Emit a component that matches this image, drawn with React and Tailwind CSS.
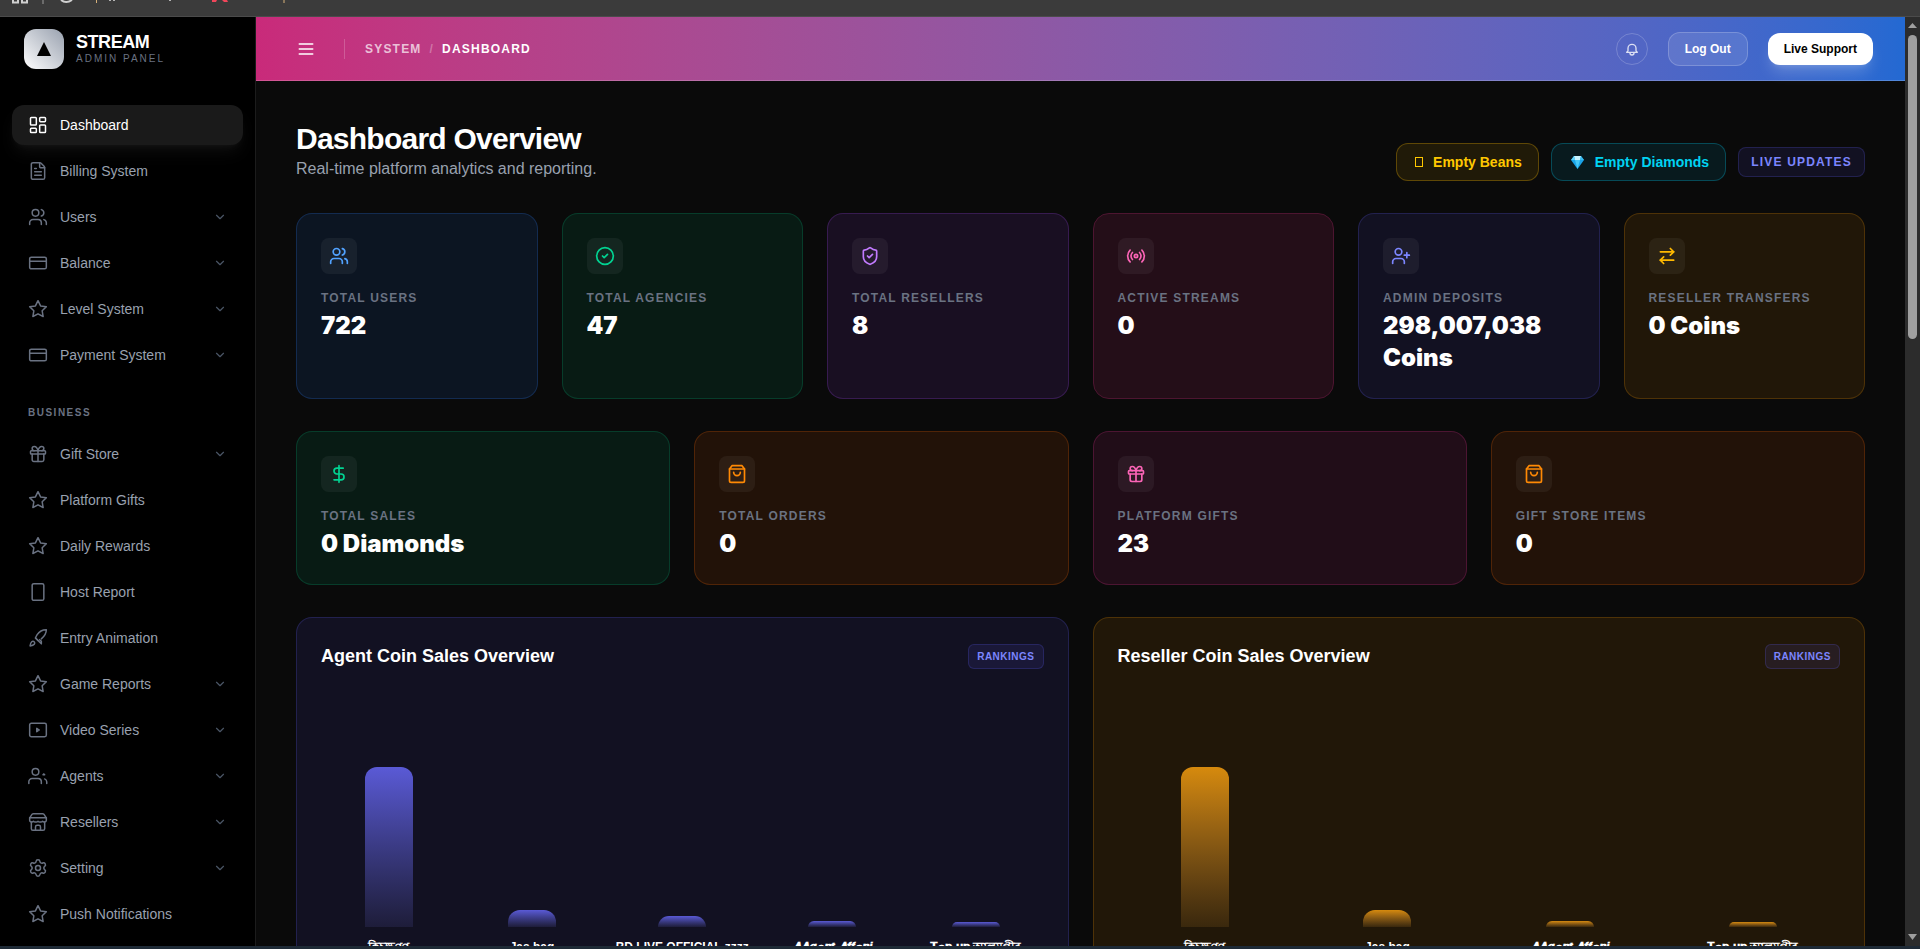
import { useState } from "react";
import {
  ArrowRightLeft,
  ChevronDown,
  CircleCheck,
  CreditCard,
  DollarSign,
  FileText,
  Gift,
  LayoutDashboard,
  Radio,
  Settings,
  ShieldCheck,
  UserPlus,
  Users,
} from "lucide-react";
import { FiShoppingBag, FiStar } from "react-icons/fi";

function Svg({ size = 20, strokeWidth = 2, className, children }) {
  return (
    <svg
      width={size}
      height={size}
      viewBox="0 0 24 24"
      fill="none"
      stroke="currentColor"
      strokeWidth={strokeWidth}
      strokeLinecap="round"
      strokeLinejoin="round"
      className={className}
      aria-hidden="true"
    >
      {children}
    </svg>
  );
}

const TabletIcon = (props) => (
  <Svg {...props}>
    <rect x="5" y="2" width="14" height="20" rx="2" />
  </Svg>
);

const RocketIcon = (props) => (
  <Svg {...props}>
    <path d="M4.5 16.5c-1.5 1.26-2 5-2 5s3.74-.5 5-2c.71-.84.7-2.13-.09-2.91a2.18 2.18 0 0 0-2.91-.09z" />
    <path d="M12 15l-3-3a22 22 0 0 1 2-3.950A12.880 12.880 0 0 1 22 2c0 2.720-.780 6.500-6 11" />
    <path d="M9 12l3 3 4 4v-3l-2-2" />
  </Svg>
);

const VideoIcon = (props) => (
  <Svg {...props}>
    <rect x="2" y="4" width="20" height="16" rx="2" />
    <path d="M10.5 10v4l3-2z" fill="currentColor" />
  </Svg>
);

const AgentsIcon = (props) => (
  <Svg {...props}>
    <path d="M16 21v-2a4 4 0 0 0-4-4H5a4 4 0 0 0-4 4v2" />
    <circle cx="9" cy="7" r="4" />
    <path d="M22.500 21v-2a4 4 0 0 0-2.500-3.500" />
    <path d="M18 10.500l1-1 1 1z" />
  </Svg>
);

const StoreIcon = (props) => (
  <Svg {...props}>
    <path d="M2 7l3-4.400A2 2 0 0 1 6.500 2h11a2 2 0 0 1 1.500.600L22 7" />
    <path d="M4 12v8a2 2 0 0 0 2 2h12a2 2 0 0 0 2-2v-8" />
    <path d="M15 22v-4a2 2 0 0 0-2-2h-2a2 2 0 0 0-2 2v4" />
    <path d="M2 7h20" />
    <path d="M22 7v3a2 2 0 0 1-2 2 2.700 2.700 0 0 1-2.600-.800 2.700 2.700 0 0 1-2.700.800 2.700 2.700 0 0 1-2.700-.800 2.700 2.700 0 0 1-2.700.800 2.700 2.700 0 0 1-2.700-.800A2.700 2.700 0 0 1 4 12a2 2 0 0 1-2-2V7" />
  </Svg>
);

const DiamondIcon = () => (
  <svg width="19" height="16" viewBox="0 0 19 16" aria-hidden="true">
    <path d="M6 2h7l3 4-6.500 9L3 6z" fill="#1aa3e8" />
    <path d="M6 2h7l-1 4H7z" fill="#c9f4ff" />
    <path d="M7 6h5l-2.500 9z" fill="#45c8f7" />
    <path d="M3 6l3-4 1 4z" fill="#5fd4fb" />
    <path d="M16 6l-3-4-1 4z" fill="#38bdf2" />
  </svg>
);

const mainNav = [
  { label: "Dashboard", icon: LayoutDashboard, active: true },
  { label: "Billing System", icon: FileText },
  { label: "Users", icon: Users, sub: true },
  { label: "Balance", icon: CreditCard, sub: true },
  { label: "Level System", icon: FiStar, sub: true },
  { label: "Payment System", icon: CreditCard, sub: true },
];

const businessNav = [
  { label: "Gift Store", icon: Gift, sub: true },
  { label: "Platform Gifts", icon: FiStar },
  { label: "Daily Rewards", icon: FiStar },
  { label: "Host Report", icon: TabletIcon },
  { label: "Entry Animation", icon: RocketIcon },
  { label: "Game Reports", icon: FiStar, sub: true },
  { label: "Video Series", icon: VideoIcon, sub: true },
  { label: "Agents", icon: AgentsIcon, sub: true },
  { label: "Resellers", icon: StoreIcon, sub: true },
  { label: "Setting", icon: Settings, sub: true },
  { label: "Push Notifications", icon: FiStar },
];

const platformStats = [
  { label: "Total Users", value: "722", icon: Users, card: "bg-blue-500/10 border-blue-500/20", color: "text-blue-400" },
  { label: "Total Agencies", value: "47", icon: CircleCheck, card: "bg-emerald-500/10 border-emerald-500/20", color: "text-emerald-400" },
  { label: "Total Resellers", value: "8", icon: ShieldCheck, card: "bg-purple-500/10 border-purple-500/20", color: "text-purple-400" },
  { label: "Active Streams", value: "0", icon: Radio, card: "bg-[#240e18] border-[#4d1530]", color: "text-pink-400" },
  { label: "Admin Deposits", value: "298,007,038 Coins", icon: UserPlus, card: "bg-indigo-500/10 border-indigo-500/20", color: "text-indigo-400" },
  { label: "Reseller Transfers", value: "0 Coins", icon: ArrowRightLeft, card: "bg-amber-500/10 border-amber-500/20", color: "text-amber-400" },
];

const salesStats = [
  { label: "Total Sales", value: "0 Diamonds", icon: DollarSign, card: "bg-emerald-500/10 border-emerald-500/20", color: "text-emerald-400" },
  { label: "Total Orders", value: "0", icon: FiShoppingBag, card: "bg-orange-500/10 border-orange-500/20", color: "text-orange-400" },
  { label: "Platform Gifts", value: "23", icon: Gift, card: "bg-pink-500/10 border-pink-500/20", color: "text-pink-400" },
  { label: "Gift Store Items", value: "0", icon: FiShoppingBag, card: "bg-orange-500/10 border-orange-500/20", color: "text-orange-400" },
];

const agentSales = [
  { name: "কিচক্ষণণ", height: 160 },
  { name: "Jas bag", height: 17 },
  { name: "BD LIVE OFFICIAL zzzz", height: 11 },
  { name: "𝑨𝑨𝒈𝒆𝒏𝒕 𝑨𝒇𝒇𝒂𝒏𝒊", height: 6 },
  { name: "𝐓𝐨𝐩 𝐮𝐩 আলমগীর", height: 5 },
];

const resellerSales = [
  { name: "কিচক্ষণণ", height: 160 },
  { name: "Jas bag", height: 17 },
  { name: "𝑨𝑨𝒈𝒆𝒏𝒕 𝑨𝒇𝒇𝒂𝒏𝒊", height: 6 },
  { name: "𝐓𝐨𝐩 𝐮𝐩 আলমগীর", height: 5 },
];

function BrowserEdge() {
  return (
    <div className="h-[17px] shrink-0 border-b border-[#4b4b4b] bg-[#3b3b3b]">
      <svg width="300" height="5" viewBox="0 0 300 5" fill="none" aria-hidden="true">
        <path d="M13 0v2.500h5V0M22 0v2.500h5V0" stroke="#d0d0d0" strokeWidth="2" />
        <path d="M43 0v4" stroke="#6b6b6b" strokeWidth="2" />
        <path d="M61 0q5 4 11 0" stroke="#d0d0d0" strokeWidth="2" />
        <path d="M96.500 0v3M284 0v3" stroke="#d8b27a" />
        <path d="M109 .500h2M113 .500h2M169 .500h2" stroke="#b5b5b5" />
        <path d="M212 0h5l-1 2h-4zM222 0h5l1 2h-4z" fill="#f0465a" />
      </svg>
    </div>
  );
}

function NavItem({ item }) {
  const Icon = item.icon;
  return (
    <a
      href="#"
      className={
        item.active
          ? "flex h-10 items-center gap-3 rounded-xl bg-[#1a1a1a] px-4 text-sm text-white shadow-lg shadow-white/5"
          : "flex h-10 items-center gap-3 rounded-xl px-4 text-sm text-gray-400 hover:bg-white/5"
      }
    >
      <Icon size={20} strokeWidth={1.8} className={item.active ? "text-white" : "text-gray-500"} />
      <span className="flex-1">{item.label}</span>
      {item.sub && <ChevronDown size={14} className="text-gray-600" />}
    </a>
  );
}

function Sidebar() {
  return (
    <aside className="flex w-64 shrink-0 flex-col overflow-hidden border-r border-[#1c1c1c] bg-black">
      <div className="flex h-16 shrink-0 items-center gap-3 px-6">
        <div className="flex h-10 w-10 items-center justify-center rounded-xl bg-linear-to-tr from-white to-gray-400 text-black">
          <svg width="14" height="14" viewBox="0 0 14 14" aria-hidden="true">
            <path d="M7 0l7 14H0z" fill="currentColor" />
          </svg>
        </div>
        <div>
          <div className="text-lg leading-[18px] font-bold tracking-tight text-white">STREAM</div>
          <div className="text-[10px] leading-[15px] tracking-[0.2em] text-gray-500">ADMIN PANEL</div>
        </div>
      </div>
      <nav className="flex flex-col gap-1.5 px-3 pt-6">
        {mainNav.map((item) => (
          <NavItem key={item.label} item={item} />
        ))}
        <div className="mt-6 mb-2 px-4 text-[10px] leading-[15px] font-bold tracking-[0.15em] text-gray-500">
          BUSINESS
        </div>
        {businessNav.map((item) => (
          <NavItem key={item.label} item={item} />
        ))}
      </nav>
    </aside>
  );
}

function Header({ onToggle }) {
  return (
    <header className="flex h-16 shrink-0 items-center justify-between border-b border-white/20 bg-linear-to-r from-[#c92a7a] to-[#2369d2] px-8">
      <div className="flex items-center gap-5">
        <button type="button" aria-label="Toggle menu" onClick={onToggle} className="p-2 text-white">
          <Svg>
            <path d="M4 6h16M4 12h16M4 18h16" />
          </Svg>
        </button>
        <div className="h-5 w-px bg-white/20" />
        <div className="flex gap-2 text-xs font-bold tracking-widest">
          <span className="text-white/70">SYSTEM</span>
          <span className="text-white/30">/</span>
          <span className="text-white">DASHBOARD</span>
        </div>
      </div>
      <div className="flex items-center gap-5">
        <button
          type="button"
          aria-label="Notifications"
          className="flex h-8 w-8 items-center justify-center rounded-full border border-white/20 text-white/80"
        >
          <Svg size={16}>
            <path d="M15 17h5l-1.405-1.405A2.032 2.032 0 0 1 18 14.158V11a6 6 0 1 0-12 0v3.159c0 .538-.214 1.055-.595 1.436L4 17h5m6 0v1a3 3 0 1 1-6 0v-1m6 0H9" />
          </Svg>
        </button>
        <button
          type="button"
          className="rounded-xl border border-white/20 bg-white/10 px-4 py-2 text-xs font-bold text-white"
        >
          Log Out
        </button>
        <button
          type="button"
          className="rounded-xl bg-white px-4 py-2 text-xs font-bold text-black shadow-lg shadow-white/20"
        >
          Live Support
        </button>
      </div>
    </header>
  );
}

function StatCard({ stat }) {
  const Icon = stat.icon;
  return (
    <div className={`rounded-2xl border p-6 ${stat.card}`}>
      <div className="mb-4 flex h-9 w-9 items-center justify-center rounded-lg bg-white/5">
        <Icon size={20} className={stat.color} />
      </div>
      <div className="mb-1 text-xs font-bold tracking-widest text-gray-500 uppercase">{stat.label}</div>
      <div className="font-['Inter',sans-serif] text-2xl font-black text-white">{stat.value}</div>
    </div>
  );
}

function SalesChart({ title, data, card, bar }) {
  return (
    <section className={`rounded-2xl border p-6 ${card}`}>
      <div className="flex h-7 items-center justify-between">
        <h2 className="text-lg font-bold text-white">{title}</h2>
        <span className="rounded-md border border-indigo-500/20 bg-indigo-500/10 px-2 py-1 text-[10px] leading-[15px] font-bold tracking-wider text-indigo-400">
          RANKINGS
        </span>
      </div>
      <div className="mt-8 flex gap-6 px-2">
        {data.map((entry) => (
          <div key={entry.name} className="flex flex-1 flex-col items-center gap-3">
            <div className="flex h-[225px] items-end">
              <div className={`w-12 rounded-t-xl bg-linear-to-b ${bar}`} style={{ height: entry.height }} />
            </div>
            <span className="text-xs font-bold whitespace-nowrap text-white">{entry.name}</span>
          </div>
        ))}
      </div>
    </section>
  );
}

function ScrollRail() {
  return (
    <div className="flex w-[15px] shrink-0 flex-col items-center justify-between bg-[#2c2c2c] py-1.5" aria-hidden="true">
      <div className="flex h-full w-full flex-col items-center">
        <svg width="9" height="5" viewBox="0 0 9 5">
          <path d="M4.500 0L9 5H0z" fill="#9f9f9f" />
        </svg>
        <div className="mt-[7px] h-1/3 w-[9px] rounded-full bg-[#9f9f9f]" />
      </div>
      <svg width="9" height="6" viewBox="0 0 9 6">
        <path d="M0 0h9L4.500 6z" fill="#9f9f9f" />
      </svg>
    </div>
  );
}

export default function App() {
  const [menuOpen, setMenuOpen] = useState(true);

  return (
    <div className="flex h-screen flex-col overflow-hidden bg-[#0a0a0a] font-['Liberation_Sans',Arial,sans-serif]">
      <BrowserEdge />
      <div className="flex min-h-0 flex-1">
        {menuOpen && <Sidebar />}
        <div className="flex min-w-0 flex-1 flex-col">
          <Header onToggle={() => setMenuOpen(!menuOpen)} />
          <main className="min-h-0 flex-1 overflow-hidden p-10">
            <div className="mb-8 flex items-end justify-between">
              <div>
                <h1 className="text-3xl font-bold tracking-tight text-white">Dashboard Overview</h1>
                <p className="text-gray-400">Real-time platform analytics and reporting.</p>
              </div>
              <div className="flex items-center gap-3">
                <button
                  type="button"
                  className="flex items-center gap-2 rounded-xl border border-yellow-500/30 bg-yellow-500/10 px-4 py-2 text-sm font-bold text-[#ffc800]"
                >
                  <span className="mx-0.5 h-2.5 w-2 border border-current" />
                  Empty Beans
                </button>
                <button
                  type="button"
                  className="flex items-center gap-2 rounded-xl border border-cyan-500/30 bg-cyan-500/10 px-4 py-2 text-sm font-bold text-[#00d3f2]"
                >
                  <DiamondIcon />
                  Empty Diamonds
                </button>
                <span className="rounded-lg border border-indigo-500/20 bg-indigo-500/10 px-3 py-1.5 text-xs font-bold tracking-widest text-indigo-400">
                  LIVE UPDATES
                </span>
              </div>
            </div>

            <div className="mb-8 grid grid-cols-6 gap-6">
              {platformStats.map((stat) => (
                <StatCard key={stat.label} stat={stat} />
              ))}
            </div>

            <div className="mb-8 grid grid-cols-4 gap-6">
              {salesStats.map((stat) => (
                <StatCard key={stat.label} stat={stat} />
              ))}
            </div>

            <div className="grid grid-cols-2 gap-6">
              <SalesChart
                title="Agent Coin Sales Overview"
                data={agentSales}
                card="bg-indigo-500/10 border-indigo-500/20"
                bar="from-[#5a5ad6] to-[#1e1d3a]"
              />
              <SalesChart
                title="Reseller Coin Sales Overview"
                data={resellerSales}
                card="bg-amber-500/10 border-amber-500/20"
                bar="from-[#d68a0d] to-[#3a280d]"
              />
            </div>
          </main>
        </div>
        <ScrollRail />
      </div>
      <div className="h-[3px] shrink-0 bg-[#1e2a36]" />
    </div>
  );
}
